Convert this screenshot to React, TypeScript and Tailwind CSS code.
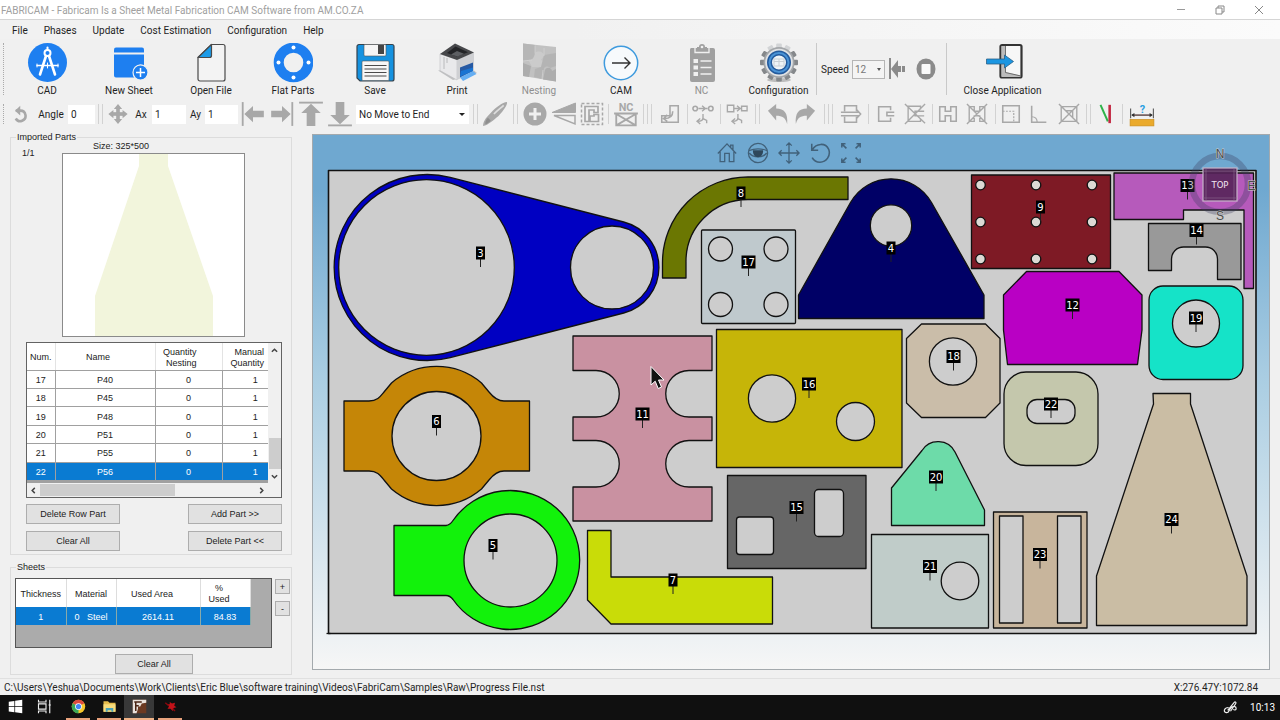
import type { ReactNode } from "react";

const INK = "#a8a8a8";
const SHEET = "#cdcdcd";

/* ---------- large toolbar ---------- */

function BigButton({ label, icon, disabled, className = "w-[82px]" }: { label: string; icon: ReactNode; disabled?: boolean; className?: string }) {
  return (
    <button type="button" disabled={disabled} className={`flex shrink-0 flex-col items-center pt-1 ${disabled ? "text-[#8f8f8f]" : "text-[#1f1f1f]"} ${className}`}>
      <svg viewBox="0 0 40 40" className="h-10 w-10" aria-hidden="true">{icon}</svg>
      <span className="text-[10px] leading-4 whitespace-nowrap">{label}</span>
    </button>
  );
}

const cadIcon = (
  <g>
    <circle cx="20.500" cy="19.500" r="19.500" fill="#1e7ff0" />
    <g fill="none" stroke="#fff" strokeLinecap="round">
      <circle cx="20.500" cy="10" r="3" strokeWidth="2" />
      <path d="M20.500 4.500v2.500" strokeWidth="2" />
      <path d="M19 13 13 31.500M22 13l6 18.500" strokeWidth="2.600" />
      <path d="M10 22.500h21" strokeWidth="1.300" />
      <path d="M10 21v3M31 21v3M20.500 20v5" strokeWidth="1" />
    </g>
  </g>
);
const newSheetIcon = (
  <g>
    <path d="M7 4.500h26a2 2 0 0 1 2 2v3H5v-3a2 2 0 0 1 2-2z" fill="#1e7ff0" />
    <path d="M5 11.500h30V22a8 8 0 0 0-9 12.500H7a2 2 0 0 1-2-2z" fill="#1e7ff0" />
    <circle cx="31.500" cy="29.500" r="7.500" fill="#1e7ff0" stroke="#f0f0f0" strokeWidth="1.200" />
    <path d="M31.500 25v9M27 29.500h9" stroke="#fff" strokeWidth="1.500" />
  </g>
);
const openIcon = (
  <g stroke="#4a4a4a" strokeWidth="1.200" strokeLinejoin="round">
    <path d="M20.500 1.500h11.500a2 2 0 0 1 2 2V36a2 2 0 0 1-2 2H9a2 2 0 0 1-2-2V14.500z" fill="#f3f3f3" />
    <path d="M20.500 1.500V12.500a2 2 0 0 1-2 2H7z" fill="#1b9be8" />
  </g>
);
const flatIcon = (
  <g>
    <circle cx="20.500" cy="19.500" r="14.800" fill="none" stroke="#1e7ff0" strokeWidth="10" />
    <g fill="#fff">
      <circle cx="20.500" cy="4.500" r="2" /><circle cx="20.500" cy="34.500" r="2" />
      <circle cx="5.500" cy="19.500" r="2" /><circle cx="35.500" cy="19.500" r="2" />
    </g>
  </g>
);
const saveIcon = (
  <g>
    <path d="M4 1.500h33a2 2 0 0 1 2 2V36a2 2 0 0 1-2 2H5l-3-3V3.500a2 2 0 0 1 2-2z" fill="#1592e0" stroke="#36424c" strokeWidth="1.200" />
    <rect x="9" y="1.500" width="22" height="11.500" rx="1" fill="#f5f5f5" stroke="#555" strokeWidth=".6" />
    <rect x="23" y="2" width="6" height="9" fill="#454545" />
    <rect x="7" y="18" width="27" height="19.500" rx="1" fill="#f7f7f7" stroke="#555" strokeWidth=".6" />
    <path d="M9.500 22.500h22M9.500 26h22M9.500 29.500h22M9.500 33h22" stroke="#4b4b4b" strokeWidth="1.200" />
  </g>
);
const printIcon = (
  <g>
    <path d="M1 27.500 16 37l24-7-6-5z" fill="#bfc0c2" />
    <path d="M3 11 20 16.500V37L3 27.500z" fill="#e9e9eb" stroke="#b6b6b8" strokeWidth=".5" />
    <path d="M20 16.500 37 9.500v19L20 37z" fill="#cfd0d3" />
    <path d="M3 11 18 .5 37 9.500 20 17z" fill="#47484b" />
    <path d="M10 10 18.500 3.500 31 9.300 20 13.500z" fill="#232427" />
    <path d="M14 11.500 20 8l7 2.800-6.500 2.700z" fill="#5d5f63" />
    <path d="M23 24.500 36 19.500v8.500L23 34.500z" fill="#2659a3" />
    <path d="M23 34.500 36 28l3.500 3L26 38z" fill="#65aef2" />
    <path d="M23 33.500 24 28l12-3.500V28z" fill="#1a74d2" />
    <path d="M7 14v12M10 15v5" stroke="#b9babc" strokeWidth="1" />
  </g>
);
const nestingIcon = (
  <g>
    <path d="M4 0.500 37 4v34.500L4 33z" fill="#c1c1c1" />
    <path d="M4 0.500 16 2v8c5-3 8 2 4 5l-5 1-11 2z" fill="#b6b6b6" />
    <path d="M16 10c3-3 9-1 9 3l-3 4c4 1 4 6 0 7h-9l-3-6c3-1 5-3 6-8z" fill="#cbcbcb" />
    <path d="M25 12l12-2v13l-6 2c-3-3-7-1-6 3l-2 8-8-2 1-8 6-2c1-5 2-7 3-12z" fill="#b4b4b4" />
    <path d="M26 27c2-4 7-2 7 1l4-2v12.500l-13-2zM4 20l8 3-2 11-6-1z" fill="#adadad" />
    <path d="M16 2.500v8M4 18l9-1M25 5v8M24 27l-1 9" stroke="#d6d6d6" strokeWidth=".7" fill="none" />
  </g>
);
const camIcon = (
  <g fill="none">
    <circle cx="20" cy="20" r="16.700" stroke="#3f9bde" strokeWidth="1.500" fill="#f7fafc" />
    <path d="M11 20h18M23.500 14.500 29 20l-5.500 5.500" stroke="#333" strokeWidth="1.400" />
  </g>
);
const ncIcon = (
  <g>
    <path d="M9 5h6v-1h2a3 3 0 0 1 6 0h2v1h6a2 2 0 0 1 2 2v30a2 2 0 0 1-2 2H10a2 2 0 0 1-2-2V7a2 2 0 0 1 1-2z" fill="#a0a0a0" />
    <path d="M13 5v4.500h14V5" fill="none" stroke="#f0f0f0" strokeWidth="1.300" />
    <circle cx="20" cy="4" r="1.300" fill="#f0f0f0" />
    <g fill="#f0f0f0">
      <rect x="11.500" y="16" width="4.500" height="4" /><rect x="11.500" y="22.500" width="4.500" height="4" /><rect x="11.500" y="29" width="4.500" height="4" />
    </g>
    <path d="M18.500 18h11M18.500 24.500h11M18.500 31h11" stroke="#f0f0f0" strokeWidth="1.600" />
  </g>
);
const gearTeeth = Array.from({ length: 12 }, (_, i) => i * 30);
const configIcon = (
  <g>
    <ellipse cx="20" cy="37" rx="12" ry="2" fill="#bdbdbd" />
    <g fill="#8d9093">
      {gearTeeth.map((a) => (
        <rect key={a} x="17.200" y="0.500" width="5.600" height="8" rx="1" transform={`rotate(${a} 20 19.500)`} fill={a > 300 || a < 60 ? "#d2d4d6" : "#85888b"} />
      ))}
      <circle cx="20" cy="19.500" r="15.500" fill="#a3a6a9" />
    </g>
    <circle cx="20" cy="19.500" r="13.800" fill="#e0e2e4" />
    <circle cx="20" cy="19.500" r="9.500" fill="#eef3f7" stroke="#235a9d" strokeWidth="5" />
    <circle cx="20" cy="19.500" r="9.500" fill="none" stroke="#4a93d6" strokeWidth="2" />
    <path d="M15 16h10v7H15zM15 18.500h10M20 16v7" stroke="#c8cfd5" strokeWidth="1" fill="none" />
  </g>
);
const closeIcon = (
  <g>
    <rect x="17.500" y="2" width="21" height="32.500" rx="1.500" fill="#f7f7f7" stroke="#333" strokeWidth="2.200" />
    <path d="M18.500 3h4v26l15 3.500v1.500h-19z" fill="#bcbcbc" />
    <path d="M22.500 3v26.500L38 33" fill="none" stroke="#555" strokeWidth=".8" />
    <path d="M3.500 16h18v-4l9 6.500-9 6.500v-4h-18z" fill="#1b96e2" stroke="#2b5f86" strokeWidth=".8" />
  </g>
);

/* ---------- small toolbar ---------- */

function Tool({ label, w, size = "h-[22px] w-[22px]", children }: { label: string; w: string; size?: string; children: ReactNode }) {
  return (
    <button type="button" aria-label={label} className={`flex h-[26px] shrink-0 items-center justify-center ${w}`}>
      <svg viewBox="0 0 24 24" className={`shrink-0 ${size}`} fill="none" stroke={INK} strokeWidth="1.700" aria-hidden="true">{children}</svg>
    </button>
  );
}

function Sep({ w, n = 1 }: { w: string; n?: number }) {
  return (
    <div className={`flex h-6 shrink-0 items-center justify-center gap-[3px] ${w}`}>
      {Array.from({ length: n }, (_, i) => <span key={i} className="h-5 w-px bg-[#d2d2d2]" />)}
    </div>
  );
}

function NumberField({ id, label, value, labelClass, inputClass }: { id: string; label: string; value: string; labelClass: string; inputClass: string }) {
  return (
    <>
      <label htmlFor={id} className={`shrink-0 text-center ${labelClass}`}>{label}</label>
      <input id={id} defaultValue={value} className={`h-[19px] shrink-0 bg-white px-[3px] text-[10px] outline-none ${inputClass}`} />
    </>
  );
}

function SmallToolbar() {
  return (
    <div className="mb-[3px] flex h-[26px] shrink-0 items-center overflow-x-hidden text-[10px] text-[#1f1f1f]">
      <div className="ml-[3px] mr-1 h-5 w-px shrink-0 border-l border-dotted border-[#aaa]" />
      <Tool label="Rotate" w="w-[26px]" size="h-[18px] w-[18px]">
        <path d="M5 7.500h6a7 7 0 1 1-6 10.500" strokeWidth="3.400" /><path d="M4 7.500 11 1v13z" fill={INK} stroke="none" />
      </Tool>
      <NumberField id="angle" label="Angle" value="0" labelClass="w-[34px]" inputClass="w-[27px]" />
      <Sep w="w-[11px]" n={2} />
      <Tool label="Move" w="w-6">
        <g fill={INK} stroke="none"><path d="m12 1 4.500 5.500h-9zM12 23l4.500-5.500h-9zM1.500 12 7 7.500v9zM22.500 12 17 7.500v9z" /><path d="M10 5h4v14h-4z" /><path d="M5 10h14v4H5z" /></g>
      </Tool>
      <NumberField id="ax" label="Ax" value="1" labelClass="w-[22px]" inputClass="w-[34px]" />
      <NumberField id="ay" label="Ay" value="1" labelClass="w-[19px]" inputClass="w-[33px]" />
      <Tool label="Align left" w="w-[29px]" size="h-[26px] w-[26px]">
        <path d="M2.500 1v22" /><path d="M4 12 12 4.500V9h10v6H12v4.500z" fill={INK} stroke="none" />
      </Tool>
      <Tool label="Align right" w="w-[29px]" size="h-[26px] w-[26px]">
        <path d="M21.500 1v22" /><path d="M20 12 12 4.500V9H2v6h10v4.500z" fill={INK} stroke="none" />
      </Tool>
      <Tool label="Align top" w="w-[29px]" size="h-[26px] w-[26px]">
        <path d="M1 1.500h22" /><path d="m12 2.500 9 8.500h-5v12H8V11H3z" fill={INK} stroke="none" />
      </Tool>
      <Tool label="Align bottom" w="w-[29px]" size="h-[26px] w-[26px]">
        <path d="M1 22.500h22" /><path d="M12 21.500 21 13h-5V1H8v12H3z" fill={INK} stroke="none" />
      </Tool>
      <div className="relative ml-[2px] shrink-0">
        <select aria-label="Move mode" className="block h-[19px] w-[113px] appearance-none bg-white pl-[3px] text-[10px] outline-none">
          <option>No Move to End</option>
        </select>
        <span className="pointer-events-none absolute top-2 right-1 border-x-[3px] border-t-[3px] border-x-transparent border-t-[#222]" />
      </div>
      <Sep w="w-3" n={2} />
      <Tool label="Draw" w="w-7" size="h-[26px] w-[26px]">
        <path d="M1 23c0-4 2-7 7-12 5-5 11-10 15-10 1 2-3 8-8 13-5 4-9 8-14 9z" fill={INK} stroke="none" /><path d="M3 21.500c2-.5 4-2 5-3.500l-2.500-2.500C4 17 3 19 3 21.500z" fill="#8e8e8e" stroke="none" /><path d="M11 12c4-4 7-6 9-8" stroke="#dedede" strokeWidth="1.600" />
      </Tool>
      <Sep w="w-3" n={2} />
      <Tool label="Add" w="w-7" size="h-6 w-6"><circle cx="12" cy="12" r="11.500" fill={INK} stroke="none" /><path d="M12 6v12M6 12h12" stroke="#f0f0f0" strokeWidth="3" /></Tool>
      <Tool label="Mirror" w="w-[29px]" size="h-6 w-6">
        <path d="M0 10.500 23.500 1v9.500z" fill={INK} stroke={INK} strokeWidth="1" /><path d="M2 13.500h21V22z" strokeWidth="1.500" />
      </Tool>
      <Tool label="Group" w="w-[27px]" size="h-6 w-6">
        <rect x="1.500" y="1.500" width="21" height="21" strokeDasharray="3 2" strokeWidth="1.500" />
        <path d="M5 4.500h13v6h-4v-2.500H9v11.500H5zM10 14h4v-1.500h4.500v7H10z" />
      </Tool>
      <Sep w="w-[7px]" />
      <Tool label="NC shape" w="w-[27px]" size="h-[26px] w-[26px]">
        <text x="12" y="9.500" textAnchor="middle" fontSize="10" fontWeight="bold" fontFamily="Roboto, sans-serif" fill={INK} stroke="none">NC</text>
        <path d="M1 11.500h22M3 12v10.500h18V12M3 12l18 10.500M21 12 3 22.500" />
      </Tool>
      <Sep w="w-[17px]" n={3} />
      <Tool label="Lead in" w="w-[27px]"><path d="M12 3h9v18H3v-7h9zM15 9c0 6-3 8-9 8M9 13l-4 4 4 3" /></Tool>
      <Sep w="w-2" />
      <Tool label="Link nodes" w="w-6"><circle cx="3.500" cy="6" r="2.500" /><circle cx="20.500" cy="6" r="2.500" /><path d="M7 6h10M11 3l3.500 3L11 9M12 12v4c0 3-2 4-6 4M9 17l-3.500 3L9 23M12 17l4 2v3" strokeWidth="1.500" /></Tool>
      <Sep w="w-[10px]" />
      <Tool label="Link shapes" w="w-6"><path d="M1.500 2.500h7v7h-7zM17 3.500h6v5h-6zM9 6h8M12 3l3.500 3L12 9M13 12v4c0 3-2 4-6 4M10 17l-3.500 3 3.500 3M13 17l4 2v3" strokeWidth="1.500" /></Tool>
      <Sep w="w-4" n={2} />
      <Tool label="Undo" w="w-[25px]"><path d="M1 8.500 10 1v5c9 0 13 5 12 17-2-7-5-9-12-9v5z" fill={INK} stroke="none" /></Tool>
      <Tool label="Redo" w="w-[30px]"><path d="M23 8.500 14 1v5C5 6 1 11 2 23c2-7 5-9 12-9v5z" fill={INK} stroke="none" /></Tool>
      <Sep w="w-[17px]" n={3} />
      <Tool label="Bridge" w="w-[27px]"><path d="M5 9V3h13v6M5 15v6h13v-6M1 10h20M1 14h20M18 7l4.500 5-4.500 5" /></Tool>
      <Sep w="w-2" />
      <Tool label="Open contour" w="w-7"><path d="M17 8V4H4v16h13v-4M21 10h-8v4h8" /></Tool>
      <Tool label="Remove contour" w="w-[30px]"><path d="M18 7V3.500H4.500V20H18v-3M22 9H12v5h10M1 1l22 21M23 1 1 23" strokeWidth="1.500" /></Tool>
      <Sep w="w-1" />
      <Tool label="Joint" w="w-[27px]"><path d="M3 4h6v5h6V4h6v16h-6v-6H9v6H3z" /></Tool>
      <Tool label="Remove joint" w="w-[31px]"><path d="M3.500 4H9v5h6V4h5.500v16H15v-6H9v6H3.500zM1 1l22 22M23 1 1 23" strokeWidth="1.500" /></Tool>
      <Sep w="w-[7px]" />
      <Tool label="Corner" w="w-[23px]"><path d="M3 3h18v18H3z" /><path d="M3 9h12v12" strokeDasharray="2 1.500" strokeWidth="1.300" /></Tool>
      <Tool label="Angle mark" w="w-[33px]"><path d="M4 3v18h16" /><path d="M4 15c4 0 6 2 6 6" strokeWidth="1.300" /></Tool>
      <Tool label="Remove corner" w="w-[27px]"><path d="M3.500 4h17v16h-17zM8 8.500h8v8M1 1l22 22M23 1 1 23" strokeWidth="1.500" /></Tool>
      <Sep w="w-[13px]" n={2} />
      <Tool label="Compare" w="w-[21px]"><path d="M6 2 14 20" stroke="#2fb34a" strokeWidth="2.200" /><path d="M16 2v20" stroke="#c22742" strokeWidth="2.800" /></Tool>
      <Sep w="w-3" />
      <Tool label="Measure" w="w-[27px]" size="h-[26px] w-[26px]">
        <text x="12.500" y="11" textAnchor="middle" fontSize="10" fontWeight="bold" fontFamily="Roboto, sans-serif" fill="#2a9fe2" stroke="none">?</text>
        <path d="M1.500 7v9M22.500 7v9" stroke="#555" strokeWidth="1" /><path d="M3 13h18" stroke="#4b3030" strokeWidth="1.200" />
        <path d="m2 13 3-2v4zM22 13l-3-2v4z" fill="#333" stroke="none" />
        <rect x="1" y="17" width="22" height="6" fill="#eaaa2c" stroke="#c98d1c" strokeWidth=".6" />
      </Tool>
    </div>
  );
}

/* ---------- left panel ---------- */

const parts = [["17", "P40"], ["18", "P45"], ["19", "P48"], ["20", "P51"], ["21", "P55"], ["22", "P56"]];

function PanelButton({ children, className = "w-[94px]" }: { children: ReactNode; className?: string }) {
  return <button type="button" className={`h-5 border border-[#adadad] bg-[#e1e1e1] text-center leading-[18px] text-[#222] ${className}`}>{children}</button>;
}

function Chevron({ label, d, className }: { label: string; d: string; className: string }) {
  return (
    <button type="button" aria-label={label} className={`flex shrink-0 items-center justify-center ${className}`}>
      <svg viewBox="0 0 8 8" className="h-[7px] w-[7px]" fill="none" stroke="#444" strokeWidth="1.700"><path d={d} /></svg>
    </button>
  );
}

function LeftPanel() {
  return (
    <aside className="w-[312px] shrink-0 pt-[2px] pl-[10px] font-['Liberation_Sans',Arial,sans-serif] text-[9px] text-[#222]">
      <fieldset className="w-[282px] border border-[#dcdcdc] pb-[3px]">
        <legend className="ml-[5px] px-px leading-[10px]">Imported Parts</legend>
        <div className="flex pl-[11px]">
          <span className="w-10 pt-[5px] leading-3">1/1</span>
          <div>
            <div className="h-[11px] pl-[31px] leading-[8px]">Size: 325*500</div>
            <svg viewBox="0 0 181 182" className="h-[184px] w-[183px] border border-[#8a8a8a] bg-white" role="img" aria-label="Part preview">
              <path d="M76 0h29v12l45 130v40H32v-40l44-130z" fill="#f2f5dc" />
            </svg>
          </div>
        </div>
        <div className="mt-[5px] ml-[15px] w-64">
          <div className="flex border border-[#636363] bg-[#f0f0f0]">
            <div className="w-[241px]">
              <table className="h-[138px] w-full table-fixed border-collapse bg-white text-center">
                <thead>
                  <tr className="h-[27px] leading-[11px]">
                    <th className="w-7 border-r border-b border-r-[#e3e3e3] border-b-[#a0a0a0] p-0 pt-[3px] font-normal">Num.</th>
                    <th className="w-[100px] border-r border-b border-r-[#e3e3e3] border-b-[#a0a0a0] p-0 pt-[3px] pr-[14px] font-normal">Name</th>
                    <th className="w-[67px] border-r border-b border-r-[#e3e3e3] border-b-[#a0a0a0] p-0 pt-[3px] pr-[25px] text-right font-normal">Quantity<br />Nesting</th>
                    <th className="border-b border-[#a0a0a0] p-0 pt-[3px] pr-1 text-right font-normal">Manual<br />Quantity</th>
                  </tr>
                </thead>
                <tbody>
                  {parts.map(([num, name]) => (
                    <tr key={num} className={`h-[18px] leading-3 ${num === "22" ? "bg-[#0a7bd2] text-white" : ""}`}>
                      <td className="border-r border-b border-[#a0a0a0] p-0 pt-px">{num}</td>
                      <td className="border-r border-b border-[#a0a0a0] p-0 pt-px">{name}</td>
                      <td className="border-r border-b border-[#a0a0a0] p-0 pt-px">0</td>
                      <td className="border-b border-[#a0a0a0] p-0 pt-px pl-5">1</td>
                    </tr>
                  ))}
                </tbody>
              </table>
              <div className="h-[2px] bg-[#a0a0a0]" />
              <div className="flex h-[14px] items-center">
                <Chevron label="Scroll left" d="M5.500 1 2.500 4l3 3" className="h-3 w-[13px]" />
                <div className="h-3 w-[135px] bg-[#cdcdcd]" />
                <Chevron label="Scroll right" d="m2.500 1 3 3-3 3" className="ml-auto h-3 w-[13px]" />
              </div>
            </div>
            <div className="flex w-[13px] flex-col items-center pb-[14px]">
              <Chevron label="Scroll up" d="m1 5.500 3-3 3 3" className="h-[14px] w-3" />
              <div className="mt-auto h-[31px] w-3 bg-[#cdcdcd]" />
              <Chevron label="Scroll down" d="m1 2.500 3 3 3-3" className="h-[14px] w-3" />
            </div>
          </div>
          <div className="mt-[6px] flex flex-wrap justify-between gap-y-[7px]">
            <PanelButton>Delete Row Part</PanelButton>
            <PanelButton>Add Part &gt;&gt;</PanelButton>
            <PanelButton>Clear All</PanelButton>
            <PanelButton>Delete Part &lt;&lt;</PanelButton>
          </div>
        </div>
      </fieldset>

      <fieldset className="mt-[7px] w-[282px] border border-[#dcdcdc]">
        <legend className="ml-[5px] px-px leading-[10px]">Sheets</legend>
        <div className="mt-[6px] flex gap-[3px] pl-1">
          <div className="h-[70px] w-[257px] border border-[#555] bg-[#ababab]">
            <table className="w-[234px] table-fixed border-collapse text-center">
              <thead>
                <tr className="h-[28px] bg-white leading-[11px]">
                  <th className="w-[50px] border-r border-[#ddd] p-0 pt-[2px] font-normal">Thickness</th>
                  <th className="w-[50px] border-r border-[#ddd] p-0 pt-[2px] font-normal">Material</th>
                  <th className="w-[84px] border-r border-[#ddd] p-0 pt-[2px] pr-3 font-normal">Used Area</th>
                  <th className="w-[50px] border-r border-[#ddd] p-0 pt-[2px] pr-3 font-normal">%<br />Used</th>
                </tr>
              </thead>
              <tbody>
                <tr className="h-[18px] bg-[#0a7bd2] leading-3 text-white">
                  <td className="border-r border-[#8aa] p-0 pt-px">1</td>
                  <td className="border-r border-[#8aa] p-0 pt-px whitespace-pre">0   Steel</td>
                  <td className="border-r border-[#8aa] p-0 pt-px">2614.11</td>
                  <td className="border-r border-[#8aa] p-0 pt-px">84.83</td>
                </tr>
              </tbody>
            </table>
          </div>
          <div className="flex flex-col gap-[7px] pt-px">
            <button type="button" aria-label="Add sheet" className="h-[15px] w-[15px] border border-[#adadad] bg-[#e1e1e1] leading-3">+</button>
            <button type="button" aria-label="Remove sheet" className="h-[15px] w-[15px] border border-[#adadad] bg-[#e1e1e1] leading-3">-</button>
          </div>
        </div>
        <div className="mt-[6px] flex justify-center pl-[6px]">
          <PanelButton className="w-[78px]">Clear All</PanelButton>
        </div>
      </fieldset>
    </aside>
  );
}

/* ---------- sheet view ---------- */

const labels: [string, number, number][] = [
  ["3", 480.5, 253], ["8", 741, 193], ["17", 748.5, 262], ["4", 891, 248], ["9", 1040.5, 207], ["13", 1187.5, 185.5],
  ["14", 1196.5, 230.5], ["12", 1072.5, 305], ["19", 1196, 318], ["18", 953.5, 356.5], ["16", 809, 384], ["22", 1051, 404],
  ["6", 436.5, 421.5], ["11", 642.5, 414], ["5", 493, 545.5], ["7", 673, 580], ["15", 796.5, 507.5], ["20", 936, 477],
  ["21", 930, 566.5], ["23", 1040, 554.5], ["24", 1171.5, 519.5],
];

const Hole = ({ x, y, r, fill = SHEET }: { x: number; y: number; r: number; fill?: string }) => <circle cx={x} cy={y} r={r} fill={fill} />;

function SheetDrawing() {
  return (
    <svg viewBox="313 135 956 534" className="block h-auto w-full" role="img" aria-label="Nested sheet layout">
      <g stroke="#111" strokeWidth="1.300" strokeLinejoin="round">
        <rect x="328.500" y="170.500" width="927.500" height="463" fill={SHEET} strokeWidth="1.600" />
        <path d="M326.500 633.500h4" />

        <path d="M450.200 177.400 623.700 222A47 47 0 0 1 623.700 313L450.200 357.600A93 93 0 1 1 450.200 177.400z" fill="#0000c2" />
        <Hole x={426.5} y={267.5} r={87.8} /><Hole x={612} y={267.5} r={41.5} />

        <path d="M662.500 278V262.500A85.500 85.500 0 0 1 748 177H848V199.500H748A62 62 0 0 0 686 262.500V278z" fill="#6b7702" />

        <rect x="701.500" y="230" width="94" height="93.500" rx="1" fill="#bfc9cd" />
        <Hole x={720.5} y={249} r={12} /><Hole x={776} y={249} r={12} /><Hole x={720.5} y={304.5} r={12} /><Hole x={776} y={304.5} r={12} />

        <path d="M798.500 295 850.500 202.500A46.500 46.500 0 0 1 931.500 202.500L984 295V318.500H798.500z" fill="#000066" />
        <Hole x={891} y={225.5} r={20.7} />

        <rect x="971.500" y="175" width="139" height="93.500" fill="#7e1a25" />
        {[980.5, 1036, 1092].map((x) => [185, 222, 259].map((y) => <Hole key={`${x}-${y}`} x={x} y={y} r={4.8} fill="#dcd9d4" />))}

        <path d="M1026.500 271.500H1119L1142 295V330L1137.500 364.500H1007.500L1003.500 330V295z" fill="#b900c4" />
        <path d="M1114 173H1253.500V288.500H1244V210H1183.500V219.500H1114z" fill="#b65abb" />
        <path d="M1148.500 223.500H1241V279.500H1217.500V259a12 12 0 0 0-12-12h-22a12 12 0 0 0-12 12V270.500H1148.500z" fill="#999" />

        <rect x="1149" y="286" width="94" height="93.500" rx="14" fill="#15e3c8" /><Hole x={1196} y={323.5} r={23.5} />
        <path d="M921.500 324H985.500L1000 338.500V403L985.500 417.500H921.500L906.500 403V338.500z" fill="#cabda9" /><Hole x={953} y={361.5} r={23.6} />
        <rect x="1004" y="372" width="94" height="93.500" rx="22" fill="#c4c7ac" />
        <rect x="1027" y="399.500" width="48" height="24" rx="10" fill={SHEET} />

        <rect x="716.500" y="329.500" width="185.500" height="138" fill="#c6b508" />
        <Hole x={772} y={398.5} r={23.6} /><Hole x={855.5} y={421.5} r={19} />

        <path d="M573 336H712V370.500H689A23.200 23.200 0 0 0 689 417H712V440.500H689A23.200 23.200 0 0 0 689 487H712V521H573V487H596A23.200 23.200 0 0 0 596 440.500H573V417H596A23.200 23.200 0 0 0 596 370.500H573z" fill="#c991a1" />

        <path d="M344 401H369C377 401 380 397 384 392L391.500 383A69.500 69.500 0 0 1 481.500 383L489 392C493 397 497 401 504 401H529.500V471H504C497 471 493 475 489 480L481.500 489A69.500 69.500 0 0 1 391.500 489L384 480C380 475 377 471 369 471H344z" fill="#c58607" />
        <Hole x={436.5} y={436} r={44.5} />

        <path d="M394 525.500H446Q450 525 453 520.500A69.500 69.500 0 1 1 453 599.500Q450 595.500 446 595.500H394z" fill="#12f20b" />
        <Hole x={510.5} y={560.5} r={46.5} />

        <path d="M587.500 530.500H611V577H772.500V624H611L587.500 600z" fill="#c9dc08" />

        <rect x="727.500" y="475.500" width="138.500" height="93" fill="#666" />
        <rect x="736.500" y="517" width="37" height="37.500" rx="3" fill={SHEET} /><rect x="814.500" y="489.500" width="29" height="47" rx="4" fill={SHEET} />

        <path d="M891.500 525.500V488L922 450.500A19 19 0 0 1 955 452L984.500 510V525.500z" fill="#6ddba9" />
        <rect x="871.500" y="534.500" width="117" height="93.500" fill="#c0ccc9" /><Hole x={960} y={581} r={18.8} />
        <rect x="993.500" y="512" width="93.500" height="116" fill="#c8b59c" />
        <rect x="999.500" y="516" width="23.500" height="107" fill={SHEET} /><rect x="1057.500" y="516" width="23.500" height="107" fill={SHEET} />
        <path d="M1153 393.500H1190.500V404L1247 576V625.500H1096.500V576L1153.500 404z" fill="#cabda4" />
      </g>

      {labels.map(([n, x, y]) => (
        <g key={n}>
          <path d={`M${x} ${y + 6}v8`} stroke="#222" strokeWidth="1" />
          <rect x={x - (n.length === 2 ? 7 : 4.5)} y={y - 6.5} width={n.length === 2 ? 14 : 9} height="13" fill="#000" />
          <text x={x} y={y + 3.5} textAnchor="middle" fontSize="10" fontFamily="'DejaVu Sans', sans-serif" fill="#fff">{n}</text>
        </g>
      ))}

      <g>
        <circle cx="1220" cy="184" r="28" fill="none" stroke="#3c3c5c" strokeOpacity=".32" strokeWidth="6.500" />
        <rect x="1203" y="168" width="34" height="33" fill="#552459" fillOpacity=".9" stroke="#c5b5c8" strokeWidth="1.200" />
        <path d="M1206 168v33M1234 168v33M1203 171h34M1203 198h34" stroke="#8d6b92" strokeWidth=".6" />
        <text x="1220" y="187.500" textAnchor="middle" fontSize="8.500" fontFamily="'DejaVu Sans', sans-serif" fill="#f1e6f2">TOP</text>
        <g fontFamily="'Liberation Sans', sans-serif" fontSize="12" fill="#4c4c4c" stroke="#ccc" strokeWidth="1" paintOrder="stroke" textAnchor="middle">
          <text x="1220" y="158">N</text><text x="1220" y="219.500">S</text><text x="1251.500" y="189.500">E</text>
        </g>
      </g>

      <path d="M651 366.500V385l4.200-3.800 3 7.300 3.300-1.500-3-7h5.500z" fill="#111" stroke="#fff" strokeWidth="1" />
    </svg>
  );
}

function ViewButton({ label, children }: { label: string; children: ReactNode }) {
  return (
    <button type="button" aria-label={label} className="flex h-6 w-[31px] items-center justify-center">
      <svg viewBox="0 0 24 24" className="h-[22px] w-[22px]" fill="none" stroke="#41617a" strokeWidth="1.400" aria-hidden="true">{children}</svg>
    </button>
  );
}

function SheetView() {
  return (
    <main className="relative mt-1 mr-[10px] mb-2 min-w-0 flex-1 self-start border border-[#a3a9ad] bg-linear-to-b from-[#6fa8d0] from-10% via-[#a9cde2] via-45% to-[#f6f6f6]">
      <SheetDrawing />
      <div className="absolute inset-x-0 top-[6px] flex justify-center pr-1">
        <ViewButton label="Home"><path d="M2 12.500 12 2l10 10.500M18.500 8.500V3.500h-2.500V6M4.500 10.500v11h5v-9h5v9h5v-11" /></ViewButton>
        <ViewButton label="View"><circle cx="12" cy="12" r="10.500" /><path d="M2 9.500c6-2.500 14-2.500 20 0M2.500 12c4 5.500 15 5.500 19 0" /><path d="M6.500 9h11c.5 4-2 7.500-5.500 7.500S6 13 6.500 9z" fill="#2e475b" stroke="none" /></ViewButton>
        <ViewButton label="Pan"><path d="M12 1v22M1 12h22M9 4l3-3 3 3M9 20l3 3 3-3M4 9l-3 3 3 3M20 9l3 3-3 3" /></ViewButton>
        <ViewButton label="Rotate view"><path d="M3 2v7h7M3.500 8.500C8 1 18 .5 21.500 8 24 15 19 22 12 22c-4 0-7-2-8.500-5" strokeWidth="1.700" /></ViewButton>
        <ViewButton label="Fit view"><path d="M7 7 2 2m0 4V2h4M17 7l5-5m-4 0h4v4M7 17l-5 5m0-4v4h4M17 17l5 5m-4 0h4v-4" strokeWidth="1.700" /></ViewButton>
      </div>
    </main>
  );
}

/* ---------- task bar ---------- */

function Task({ label, className, children }: { label: string; className: string; children: ReactNode }) {
  return (
    <button type="button" aria-label={label} className={`flex h-[25px] items-center justify-center border-b-2 ${className}`}>
      <svg viewBox="0 0 20 20" className="h-[15px] w-[15px]" aria-hidden="true">{children}</svg>
    </button>
  );
}

function Taskbar() {
  return (
    <footer className="flex h-[25px] shrink-0 items-center bg-[#101010] text-[10px] text-white">
      <Task label="Start" className="w-[30px] border-transparent"><path d="M1 3.500 8.500 2.500v7H1zM9.500 2.300 19 1v8.500H9.500zM1 10.500h7.500v7L1 16.500zM9.500 10.500H19V19l-9.500-1.300z" fill="#fff" /></Task>
      <Task label="Task view" className="mr-[7px] w-[29px] border-transparent"><path d="M2 1v3h10V1M2 19v-3h10v3M2 6.500h10v7H2zM17 1v18M15.500 8h3" fill="none" stroke="#eee" strokeWidth="1.500" /></Task>
      <Task label="Chrome" className="mr-[7px] w-6 border-[#e8a27c]">
        <circle cx="10" cy="10" r="9" fill="#f4c62c" /><path d="M10 10 2.200 5.500A9 9 0 0 1 17.800 5.500z" fill="#dd4b3e" /><path d="M10 10 2.200 5.500A9 9 0 0 0 10 19z" fill="#3aa757" /><circle cx="10" cy="10" r="4.500" fill="#fff" /><circle cx="10" cy="10" r="3.500" fill="#4285f4" />
      </Task>
      <Task label="File Explorer" className="mr-[3px] w-6 border-[#e8a27c]"><path d="M2 3h6l2 2h8v12H2z" fill="#e6bd4c" /><path d="M2 7h16v10H2z" fill="#f7dc7d" /><path d="M5 12h10v5h-2.500v-2h-5v2H5z" fill="#4aa3b8" /></Task>
      <Task label="Fabricam" className="mr-1 w-[30px] border-[#f0b286] bg-[#383838]"><rect x="1" y="1" width="18" height="18" fill="#6b3a22" /><path d="M1 1h18v4l-6 1-2 4H8v3l-2 6H1z" fill="#e9e2dc" /><path d="M3 4h10M5 4v12M5 9h4" stroke="#4a2413" strokeWidth="2" fill="none" /></Task>
      <Task label="Viewer" className="w-6 border-[#e8a27c]"><path d="m9 4 3 2 4-1-1 4 3 2-4 1-1 4-3-3-4 0 2-3-3-3 4 0z" fill="#c31219" /><path d="M3 5l5 4M13 13l3 3" stroke="#8a080d" strokeWidth="2" /></Task>
      <svg viewBox="0 0 16 16" className="ml-auto h-[15px] w-[15px]" fill="none" stroke="#eee" strokeWidth="1.300" aria-hidden="true"><path d="M5 11 12 2.500c1-1 2.500 0 1.500 1.500L8 12M6 8C1 8 0 13 3.500 13.500 7 14 6 10 9 8s5-1 5 1-2 2-3 1" /></svg>
      <time className="mr-[5px] ml-3">10:13</time>
    </footer>
  );
}

/* ---------- window ---------- */

export default function App() {
  return (
    <div className="flex min-h-screen flex-col bg-[#f0f0f0] font-[Roboto,'Noto_Sans',sans-serif] text-[10px] text-[#1f1f1f]">
      <header className="flex h-5 shrink-0 items-center border-b border-[#d5d5d5] bg-white pl-px text-[#a0a0a0]">
        <h1 className="pt-px text-[10px]">FABRICAM - Fabricam Is a Sheet Metal Fabrication CAM Software from AM.CO.ZA</h1>
        <div className="ml-auto flex pr-[2px]">
          <button type="button" aria-label="Minimize" className="flex w-[39px] justify-center"><svg viewBox="0 0 10 10" className="h-[10px] w-[10px]" fill="none" stroke="#999"><path d="M1 4.500h8" /></svg></button>
          <button type="button" aria-label="Restore" className="flex w-[39px] justify-center"><svg viewBox="0 0 10 10" className="h-[10px] w-[10px]" fill="none" stroke="#888"><path d="M1 3h6v6H1zM3 3V1h6v6H7" /></svg></button>
          <button type="button" aria-label="Close" className="flex w-[39px] justify-center"><svg viewBox="0 0 10 10" className="h-[10px] w-[10px]" fill="none" stroke="#888"><path d="m1 1 8 8M9 1 1 9" /></svg></button>
        </div>
      </header>

      <nav className="flex h-[19px] shrink-0 items-center gap-4 bg-linear-to-r from-[#f1f1f1] from-45% to-[#fbfbfb] pt-px pl-3 text-[10px]">
        {["File", "Phases", "Update", "Cost Estimation", "Configuration", "Help"].map((m) => <button key={m} type="button">{m}</button>)}
      </nav>

      <div className="flex h-[62px] shrink-0 items-start">
        <div className="mt-1 ml-[3px] mr-[2px] h-[52px] w-px border-l border-dotted border-[#aaa]" />
        <BigButton label="CAD" icon={cadIcon} />
        <BigButton label="New Sheet" icon={newSheetIcon} />
        <BigButton label="Open File" icon={openIcon} />
        <BigButton label="Flat Parts" icon={flatIcon} />
        <BigButton label="Save" icon={saveIcon} />
        <BigButton label="Print" icon={printIcon} />
        <BigButton label="Nesting" icon={nestingIcon} disabled />
        <BigButton label="CAM" icon={camIcon} />
        <BigButton label="NC" icon={ncIcon} disabled className="w-[79px]" />
        <BigButton label="Configuration" icon={configIcon} className="w-[75px]" />
        <div className="mt-1 h-[52px] w-px shrink-0 bg-[#c9c9c9]" />
        <div className="flex h-[60px] items-center pl-1">
          <label htmlFor="speed" className="w-[31px]">Speed</label>
          <div className="relative">
            <select id="speed" disabled className="block h-[19px] w-[33px] appearance-none border border-[#b5b5b5] bg-[#f4f4f4] pl-[2px] text-[10px] text-[#777] opacity-100">
              <option>12</option>
            </select>
            <span className="pointer-events-none absolute top-2 right-1 border-x-2 border-t-[3px] border-x-transparent border-t-[#555]" />
          </div>
          <button type="button" aria-label="Rewind" className="ml-[3px]">
            <svg viewBox="0 0 18 22" className="h-[22px] w-[18px]" fill="#8b8b8b"><path d="M1 0h2v21H1zM3 11l7-9v6h3v6h-3v6zM14 8h3v6h-3z" /></svg>
          </button>
          <button type="button" aria-label="Stop" className="ml-[10px]">
            <svg viewBox="0 0 20 22" className="h-[22px] w-5"><ellipse cx="10" cy="11" rx="9.500" ry="10.500" fill="#8b8b8b" /><rect x="5.500" y="6" width="9" height="10" rx="1" fill="#fafafa" /></svg>
          </button>
        </div>
        <div className="mt-1 ml-[10px] h-[52px] w-px bg-[#c9c9c9]" />
        <BigButton label="Close Application" icon={closeIcon} className="ml-2 w-[95px]" />
      </div>

      <SmallToolbar />

      <div className="flex flex-1">
        <LeftPanel />
        <SheetView />
      </div>

      <div className="flex h-[17px] shrink-0 items-center justify-between border-t border-[#e0e0e0] pt-px pr-[22px] pl-1 text-[10px]">
        <span>C:\Users\Yeshua\Documents\Work\Clients\Eric Blue\software training\Videos\FabriCam\Samples\Raw\Progress File.nst</span>
        <span>X:276.47Y:1072.84</span>
      </div>
      <Taskbar />
    </div>
  );
}
